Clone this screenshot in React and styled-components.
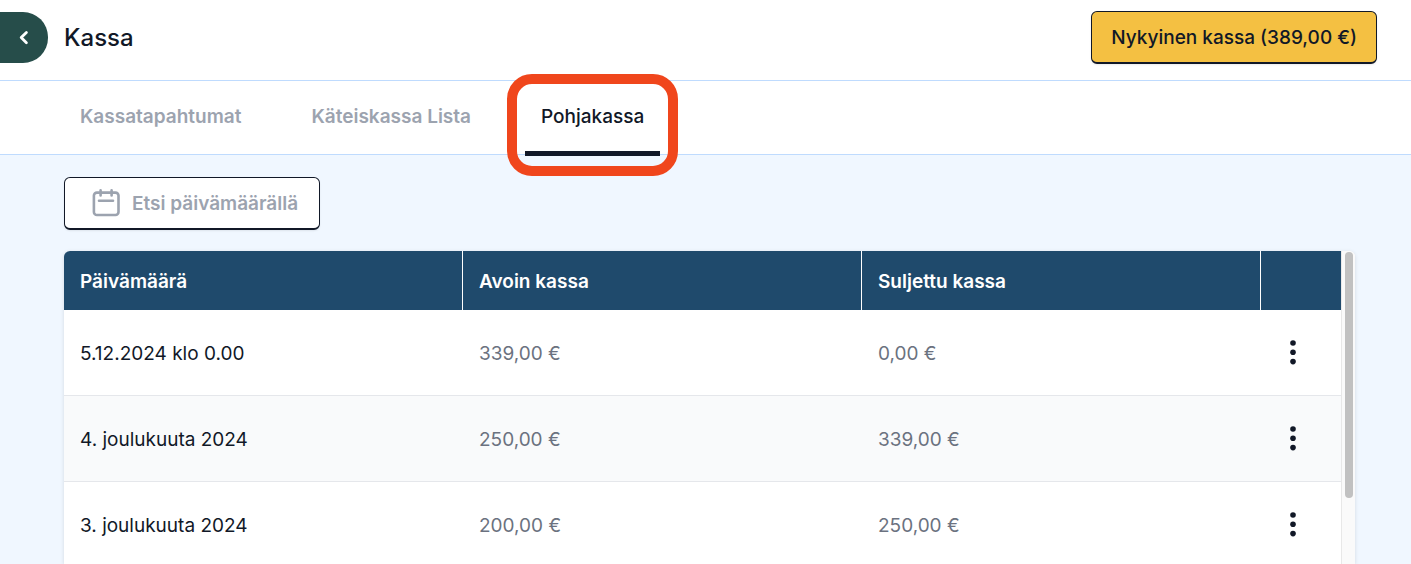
import React from 'react'
import styled, { createGlobalStyle } from 'styled-components'

const GlobalStyle = createGlobalStyle`
  * {
    box-sizing: border-box;
  }
  body {
    margin: 0;
    background-color: #f0f7ff;
    color: #111827;
    font-family: Inter, 'Liberation Sans', sans-serif;
  }
  button, input {
    font-family: inherit;
    color: inherit;
  }
`
const Page = styled.div`
  height: 100vh;
  display: flex;
  flex-direction: column;
  overflow: hidden;
`
const Header = styled.header`
  flex: none;
  display: flex;
  align-items: center;
  padding: 11px 34px 16px 0;
  background-color: white;
  border-bottom: 1px solid #bfdbfe;
`
const BackButton = styled.button`
  width: 48px;
  height: 51px;
  padding: 0 16px 0 0;
  display: flex;
  align-items: center;
  justify-content: flex-end;
  border: none;
  border-radius: 0 25px 25px 0;
  background-color: #264d4a;
  color: white;
  cursor: pointer;
`
const Title = styled.h1`
  flex: 1;
  margin: 0 0 0 16px;
  font-size: 24px;
  line-height: 31px;
  font-weight: 500;
`
const CashButton = styled.button`
  height: 53px;
  padding: 0 19px;
  border: 1px solid #111827;
  border-bottom-width: 2px;
  border-radius: 6px;
  background-color: #f4c042;
  box-shadow: 0 1px 2px rgba(0, 0, 0, 0.08);
  font-size: 19px;
  font-weight: 500;
  cursor: pointer;
`
const Tabs = styled.nav`
  flex: none;
  display: flex;
  gap: 38px;
  height: 74px;
  padding: 0 64px;
  background-color: white;
  border-bottom: 1px solid #bfdbfe;
`
const Tab = styled.button`
  position: relative;
  height: 75px;
  padding: 0 16px;
  border: none;
  border-bottom: 5px solid ${(props) => (props.$active ? '#111827' : 'transparent')};
  background: none;
  color: ${(props) => (props.$active ? '#111827' : '#9ca3af')};
  font-size: 19px;
  font-weight: ${(props) => (props.$active ? 500 : 600)};
  cursor: pointer;
`
const Highlight = styled.span`
  position: absolute;
  top: -7px;
  right: -18px;
  bottom: -25px;
  left: -18px;
  border: 10px solid #f0461c;
  border-radius: 25px;
  pointer-events: none;
`
const Main = styled.main`
  flex: 1;
  min-height: 0;
  display: flex;
  flex-direction: column;
  align-items: flex-start;
  gap: 21px;
  padding: 22px 56px 0 64px;
`
const DateSearch = styled.label`
  flex: none;
  width: 256px;
  height: 53px;
  display: flex;
  align-items: center;
  gap: 12px;
  padding: 0 16px 0 27px;
  border: 1px solid #111827;
  border-bottom-width: 2px;
  border-radius: 6px;
  background-color: white;
  box-shadow: 0 1px 2px rgba(0, 0, 0, 0.08);
  color: #9ca3af;
`
const DateInput = styled.input`
  flex: 1;
  min-width: 0;
  padding: 0;
  border: none;
  outline: none;
  background: none;
  font-size: 19px;
  font-weight: 600;
  &::placeholder {
    color: #9ca3af;
    opacity: 1;
  }
`
const Panel = styled.div`
  flex: 1;
  min-height: 0;
  width: 100%;
  display: flex;
  overflow: hidden;
  border-radius: 6px 6px 0 0;
  background-color: white;
  box-shadow: 0 1px 4px rgba(0, 0, 0, 0.12);
`
const TableArea = styled.div`
  flex: 1;
  overflow: hidden;
`
const Table = styled.table`
  width: 100%;
  table-layout: fixed;
  border-collapse: separate;
  border-spacing: 0;
  font-size: 19px;
  text-align: left;
`
const HeadCell = styled.th`
  width: ${(props) => (props.$narrow ? '80px' : 'auto')};
  height: 59px;
  padding: 2px 16px 0;
  background-color: #1f4a6c;
  border-right: ${(props) => (props.$narrow ? 'none' : '1px solid white')};
  color: white;
  font-weight: 600;
`
const Row = styled.tr`
  background-color: ${(props) => (props.$striped ? '#f9fafb' : 'white')};
`
const Cell = styled.td`
  height: 86px;
  padding: 2px 16px 0;
  border-bottom: 1px solid #e5e7eb;
  color: ${(props) => (props.$muted ? '#6b7280' : '#111827')};
`
const MenuCell = styled(Cell)`
  padding: 0 16px;
`
const MenuButton = styled.button`
  display: flex;
  padding: 8px 12px;
  border: none;
  background: none;
  cursor: pointer;
`
const Track = styled.div`
  flex: none;
  width: 14px;
  padding: 1px 2px 0 3px;
  border-left: 1px solid #e8e8e8;
  background-color: #fafafa;
`
const Thumb = styled.div`
  height: 79%;
  border-radius: 4px;
  background-color: #c1c1c1;
`

const tabs = ['Kassatapahtumat', 'Käteiskassa Lista', 'Pohjakassa']

const rows = [
  { date: '5.12.2024 klo 0.00', open: '339,00 €', closed: '0,00 €' },
  { date: '4. joulukuuta 2024', open: '250,00 €', closed: '339,00 €' },
  { date: '3. joulukuuta 2024', open: '200,00 €', closed: '250,00 €' },
]

function ChevronIcon() {
  return (
    <svg width="16" height="16" viewBox="0 0 16 16" fill="none" stroke="currentColor" strokeWidth="2.8" strokeLinecap="round" strokeLinejoin="round">
      <path d="M10.4 2.4L5.2 7.6l5.2 5.2" />
    </svg>
  )
}

function CalendarIcon() {
  return (
    <svg width="28" height="28" viewBox="0 0 28 28" fill="none" stroke="currentColor" strokeWidth="2.6" strokeLinecap="round">
      <rect x="1.9" y="3.6" width="24.6" height="22.4" rx="3" />
      <path d="M8.6 1.4v5M19.6 1.4v5M7 11.8h14" />
    </svg>
  )
}

function DotsIcon() {
  return (
    <svg width="8" height="26" viewBox="0 0 8 26" fill="#111827">
      <circle cx="4" cy="3" r="2.8" />
      <circle cx="4" cy="12.3" r="2.8" />
      <circle cx="4" cy="21.6" r="2.8" />
    </svg>
  )
}

function App() {
  return (
    <Page>
      <GlobalStyle />
      <Header>
        <BackButton aria-label="Takaisin">
          <ChevronIcon />
        </BackButton>
        <Title>Kassa</Title>
        <CashButton>Nykyinen kassa (389,00 €)</CashButton>
      </Header>
      <Tabs>
        {tabs.map((tab) => (
          <Tab key={tab} $active={tab === 'Pohjakassa'}>
            {tab}
            {tab === 'Pohjakassa' && <Highlight />}
          </Tab>
        ))}
      </Tabs>
      <Main>
        <DateSearch>
          <CalendarIcon />
          <DateInput type="text" aria-label="Etsi päivämäärällä" placeholder="Etsi päivämäärällä" />
        </DateSearch>
        <Panel>
          <TableArea>
            <Table>
              <thead>
                <tr>
                  <HeadCell>Päivämäärä</HeadCell>
                  <HeadCell>Avoin kassa</HeadCell>
                  <HeadCell>Suljettu kassa</HeadCell>
                  <HeadCell $narrow />
                </tr>
              </thead>
              <tbody>
                {rows.map((row, i) => (
                  <Row key={row.date} $striped={i % 2 === 1}>
                    <Cell>{row.date}</Cell>
                    <Cell $muted>{row.open}</Cell>
                    <Cell $muted>{row.closed}</Cell>
                    <MenuCell>
                      <MenuButton aria-label="Valikko">
                        <DotsIcon />
                      </MenuButton>
                    </MenuCell>
                  </Row>
                ))}
              </tbody>
            </Table>
          </TableArea>
          <Track>
            <Thumb />
          </Track>
        </Panel>
      </Main>
    </Page>
  )
}

export default App
